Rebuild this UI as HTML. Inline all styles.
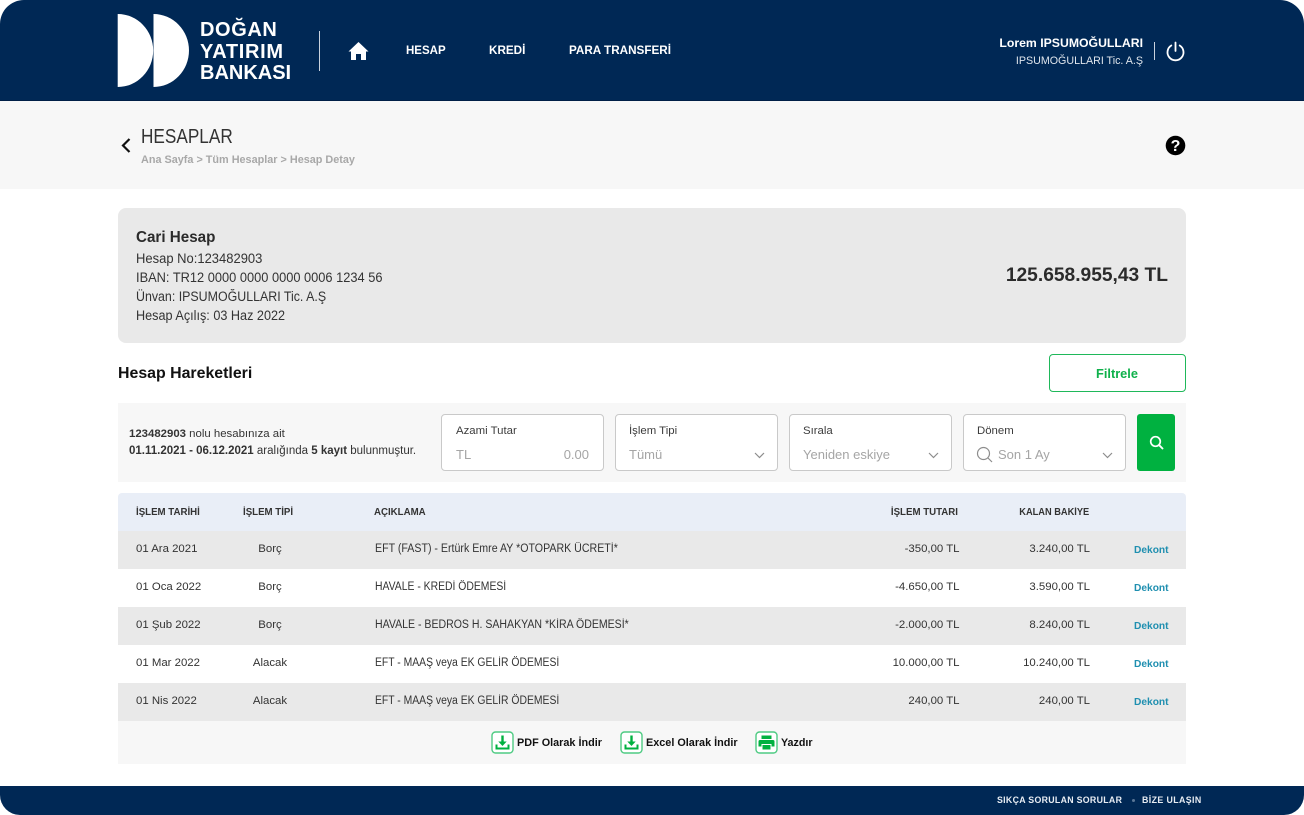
<!DOCTYPE html>
<html lang="tr"><head><meta charset="utf-8"><title>Hesap Detay</title>
<style>
*{box-sizing:border-box;margin:0;padding:0}
html,body{width:1304px;height:815px;overflow:hidden;background:#fff}
body{position:relative;font-family:"Liberation Sans",sans-serif;color:#333}
.a,.t{position:absolute}
.t{white-space:nowrap;line-height:16px;height:16px}
.r{text-align:right}
.c{text-align:center}
.b{font-weight:700}
.row{position:absolute;left:118px;width:1068px;height:38px}
.g{background:#e9e9e9}
.in{position:absolute;top:414px;width:163px;height:57px;background:#fff;border:1px solid #c9c9c9;border-radius:4px}
.lab{font-size:11.400px;color:#3c3c3c}
.ph{font-size:13px;color:#a5a5a5}
.th{font-size:9.700px;font-weight:700;color:#333}
.td{font-size:11.400px;color:#333}
.ds{font-size:11.500px;color:#333;transform-origin:left center}
.ac{font-size:13.500px;color:#333;transform-origin:left center}
.dk{font-size:10.200px;font-weight:700;color:#1f8fb0}
.act{font-size:10.850px;font-weight:700;color:#111}
svg{position:absolute;display:block}
</style></head><body>
<div class="a" style="left:0;top:0;width:1304px;height:101px;background:#002855;border-radius:24px 24px 0 0;border-bottom:1px solid #001f47"></div>
<svg style="left:117px;top:13px" width="74" height="76" viewBox="0 0 74 76"><path fill="#fff" d="M0.700 1A35.500 36.500 0 0 1 0.700 74ZM36.500 1A35.500 36.500 0 0 1 36.500 74Z"/></svg>
<div class="t b" style="left:200px;top:21px;font-size:20px;letter-spacing:.6px;line-height:18px;height:18px;color:#fff">DOĞAN</div>
<div class="t b" style="left:200px;top:43px;font-size:20px;letter-spacing:.7px;line-height:18px;height:18px;color:#fff">YATIRIM</div>
<div class="t b" style="left:200px;top:64px;font-size:20px;line-height:18px;height:18px;color:#fff">BANKASI</div>
<div class="a" style="left:319px;top:31px;width:1px;height:40px;background:#c9d2de"></div>
<svg style="left:348px;top:41px" width="21" height="20" viewBox="0 0 21 20"><path fill="#fff" d="M10.500 1 0.500 10.500 3 10.500 3 19 8 19 8 13 13 13 13 19 18 19 18 10.500 20.500 10.500Z"/></svg>
<div class="t b" style="left:406px;top:43px;font-size:11.500px;color:#fff">HESAP</div>
<div class="t b" style="left:489px;top:43px;font-size:11.700px;color:#fff">KREDİ</div>
<div class="t b" style="left:569px;top:43px;font-size:11.700px;color:#fff">PARA TRANSFERİ</div>
<div class="t b r" style="right:161px;top:35px;font-size:12.250px;color:#fff">Lorem IPSUMOĞULLARI</div>
<div class="t r" style="right:161px;top:53px;font-size:10.700px;color:#dfe5ec">IPSUMOĞULLARI Tic. A.Ş</div>
<div class="a" style="left:1154px;top:42px;width:1px;height:18px;background:#c9d2de"></div>
<svg style="left:1165px;top:41px" width="21" height="21" viewBox="0 0 21 21"><path fill="none" stroke="#fff" stroke-width="1.800" stroke-linecap="round" d="M10.500 1.500V10M6.300 4.500A8 8 0 1 0 14.700 4.500"/></svg>

<div class="a" style="left:0;top:101px;width:1304px;height:88px;background:#f7f7f7"></div>
<svg style="left:119px;top:137px" width="14" height="16" viewBox="0 0 14 16"><path fill="none" stroke="#111" stroke-width="2.200" d="M10.500 2 4 8.500 10.500 15"/></svg>
<div class="t" style="left:141px;top:126px;font-size:20px;line-height:22px;height:22px;color:#333;transform:scaleX(.86);transform-origin:left center">HESAPLAR</div>
<div class="t b" style="left:141px;top:152px;font-size:10.850px;color:#a8a8a8">Ana Sayfa &gt; Tüm Hesaplar &gt; Hesap Detay</div>
<svg style="left:1165px;top:135px" width="21" height="21" viewBox="0 0 21 21"><circle cx="10.500" cy="10.500" r="9.800" fill="#000"/><text x="10.500" y="16" text-anchor="middle" font-family="Liberation Sans" font-weight="700" font-size="16" fill="#fff">?</text></svg>

<div class="a" style="left:118px;top:208px;width:1068px;height:135px;background:#e9e9e9;border-radius:8px"></div>
<div class="t b" style="left:136px;top:230px;font-size:16px;color:#2b2b2b;transform:scaleX(.95);transform-origin:left center">Cari Hesap</div>
<div class="t ac" style="left:136px;top:251px;transform:scaleX(.962)">Hesap No:123482903</div>
<div class="t ac" style="left:136px;top:270px;transform:scaleX(.95)">IBAN: TR12 0000 0000 0000 0006 1234 56</div>
<div class="t ac" style="left:136px;top:289px;transform:scaleX(.918)">Ünvan: IPSUMOĞULLARI Tic. A.Ş</div>
<div class="t ac" style="left:136px;top:308px;transform:scaleX(.937)">Hesap Açılış: 03 Haz 2022</div>
<div class="t b r" style="right:136px;top:266px;font-size:19.200px;line-height:20px;height:20px;color:#2b2b2b">125.658.955,43 TL</div>

<div class="t b" style="left:118px;top:366px;font-size:15.900px;color:#111">Hesap Hareketleri</div>
<div class="a" style="left:1049px;top:354px;width:137px;height:38px;border:1px solid #1fb85a;border-radius:4px;background:#fff"></div>
<div class="t b c" style="left:1049px;width:136px;top:366px;font-size:12.800px;color:#0fb14b">Filtrele</div>

<div class="a" style="left:118px;top:403px;width:1068px;height:79px;background:#f7f7f7"></div>
<div class="t" style="left:129px;top:426px;font-size:11.400px;color:#333"><span class="b">123482903</span> nolu hesabınıza ait</div>
<div class="t" style="left:129px;top:443px;font-size:11.500px;color:#333"><span class="b">01.11.2021 - 06.12.2021</span> aralığında <span class="b">5 kayıt</span> bulunmuştur.</div>

<div class="in" style="left:441px"></div>
<div class="t lab" style="left:456px;top:423px">Azami Tutar</div>
<div class="t ph" style="left:456px;top:447px">TL</div>
<div class="t ph r" style="right:715px;top:447px">0.00</div>

<div class="in" style="left:615px"></div>
<div class="t lab" style="left:629px;top:423px">İşlem Tipi</div>
<div class="t ph" style="left:629px;top:447px">Tümü</div>
<svg style="left:754px;top:452px" width="11" height="7" viewBox="0 0 11 7"><path fill="none" stroke="#8d8d8d" stroke-width="1.200" d="M1 1 5.500 5.500 10 1"/></svg>

<div class="in" style="left:789px"></div>
<div class="t lab" style="left:803px;top:423px">Sırala</div>
<div class="t ph" style="left:803px;top:447px">Yeniden eskiye</div>
<svg style="left:928px;top:452px" width="11" height="7" viewBox="0 0 11 7"><path fill="none" stroke="#8d8d8d" stroke-width="1.200" d="M1 1 5.500 5.500 10 1"/></svg>

<div class="in" style="left:963px"></div>
<div class="t lab" style="left:977px;top:423px">Dönem</div>
<svg style="left:976px;top:446px" width="17" height="17" viewBox="0 0 17 17"><circle cx="7.500" cy="7.500" r="6" fill="none" stroke="#8d8d8d" stroke-width="1.200"/><path stroke="#8d8d8d" stroke-width="1.200" d="M12 12 16 16"/></svg>
<div class="t ph" style="left:998px;top:447px">Son 1 Ay</div>
<svg style="left:1102px;top:452px" width="11" height="7" viewBox="0 0 11 7"><path fill="none" stroke="#8d8d8d" stroke-width="1.200" d="M1 1 5.500 5.500 10 1"/></svg>

<div class="a" style="left:1137px;top:414px;width:38px;height:57px;background:#00b140;border-radius:3px"></div>
<svg style="left:1148px;top:434px" width="17" height="17" viewBox="0 0 17 17"><circle cx="7.500" cy="7.500" r="4.800" fill="none" stroke="#fff" stroke-width="1.700"/><path stroke="#fff" stroke-width="1.900" stroke-linecap="round" d="M11.200 11.200 14.500 14.500"/></svg>

<div class="a" style="left:118px;top:493px;width:1068px;height:38px;background:#e9eef7;border-radius:4px 4px 0 0"></div>
<div class="t th" style="left:136px;top:505px">İŞLEM TARİHİ</div>
<div class="t th" style="left:243px;top:505px">İŞLEM TİPİ</div>
<div class="t th" style="left:374px;top:505px">AÇIKLAMA</div>
<div class="t th r" style="right:346px;top:505px">İŞLEM TUTARI</div>
<div class="t th r" style="right:215px;top:505px;transform:scaleX(.955);transform-origin:right center">KALAN BAKİYE</div>

<div class="row g" style="top:531px"></div>
<div class="t td" style="left:136px;top:541px">01 Ara 2021</div>
<div class="t td c" style="left:240px;width:60px;top:541px">Borç</div>
<div class="t ds" style="left:375px;top:541px;transform:scaleX(.924)">EFT (FAST) - Ertürk Emre AY *OTOPARK ÜCRETİ*</div>
<div class="t td r" style="right:344.500px;top:541px">-350,00 TL</div>
<div class="t td r" style="right:214px;top:541px">3.240,00 TL</div>
<div class="t dk" style="left:1134px;top:543px">Dekont</div>

<div class="row" style="top:569px;background:#fff"></div>
<div class="t td" style="left:136px;top:579px">01 Oca 2022</div>
<div class="t td c" style="left:240px;width:60px;top:579px">Borç</div>
<div class="t ds" style="left:375px;top:579px;transform:scaleX(.903)">HAVALE - KREDİ ÖDEMESİ</div>
<div class="t td r" style="right:344.500px;top:579px">-4.650,00 TL</div>
<div class="t td r" style="right:214px;top:579px">3.590,00 TL</div>
<div class="t dk" style="left:1134px;top:581px">Dekont</div>

<div class="row g" style="top:607px"></div>
<div class="t td" style="left:136px;top:617px">01 Şub 2022</div>
<div class="t td c" style="left:240px;width:60px;top:617px">Borç</div>
<div class="t ds" style="left:375px;top:617px;transform:scaleX(.917)">HAVALE - BEDROS H. SAHAKYAN *KİRA ÖDEMESİ*</div>
<div class="t td r" style="right:344.500px;top:617px">-2.000,00 TL</div>
<div class="t td r" style="right:214px;top:617px">8.240,00 TL</div>
<div class="t dk" style="left:1134px;top:619px">Dekont</div>

<div class="row" style="top:645px;background:#fff"></div>
<div class="t td" style="left:136px;top:655px">01 Mar 2022</div>
<div class="t td c" style="left:240px;width:60px;top:655px">Alacak</div>
<div class="t ds" style="left:375px;top:655px;transform:scaleX(.902)">EFT - MAAŞ veya EK GELİR ÖDEMESİ</div>
<div class="t td r" style="right:344.500px;top:655px">10.000,00 TL</div>
<div class="t td r" style="right:214px;top:655px">10.240,00 TL</div>
<div class="t dk" style="left:1134px;top:657px">Dekont</div>

<div class="row g" style="top:683px"></div>
<div class="t td" style="left:136px;top:693px">01 Nis 2022</div>
<div class="t td c" style="left:240px;width:60px;top:693px">Alacak</div>
<div class="t ds" style="left:375px;top:693px;transform:scaleX(.902)">EFT - MAAŞ veya EK GELİR ÖDEMESİ</div>
<div class="t td r" style="right:344.500px;top:693px">240,00 TL</div>
<div class="t td r" style="right:214px;top:693px">240,00 TL</div>
<div class="t dk" style="left:1134px;top:695px">Dekont</div>

<div class="a" style="left:118px;top:721px;width:1068px;height:43px;background:#f7f7f7"></div>
<svg style="left:491px;top:731px" width="23" height="23" viewBox="0 0 23 23"><rect x="1" y="1" width="21" height="21" rx="3.500" fill="#fff" stroke="#4fcb83" stroke-width="1.400"/><path fill="#00b140" d="M10.300 4.500h2.400v6h3l-4.200 4.500-4.200-4.500h3zM4.500 13.500h2v3h10v-3h2v5h-14z"/></svg>
<div class="t act" style="left:517px;top:735px">PDF Olarak İndir</div>
<svg style="left:620px;top:731px" width="23" height="23" viewBox="0 0 23 23"><rect x="1" y="1" width="21" height="21" rx="3.500" fill="#fff" stroke="#4fcb83" stroke-width="1.400"/><path fill="#00b140" d="M10.300 4.500h2.400v6h3l-4.200 4.500-4.200-4.500h3zM4.500 13.500h2v3h10v-3h2v5h-14z"/></svg>
<div class="t act" style="left:646px;top:735px">Excel Olarak İndir</div>
<svg style="left:755px;top:731px" width="23" height="23" viewBox="0 0 23 23"><rect x="1" y="1" width="21" height="21" rx="3.500" fill="#fff" stroke="#4fcb83" stroke-width="1.400"/><path fill="#00b140" d="M6.500 4.500h10v3.500h-10zM5 9h13a1.500 1.500 0 0 1 1.500 1.500v5h-3v-2.500h-10v2.500h-3v-5A1.500 1.500 0 0 1 5 9zM7.500 14h8v4.500h-8z"/></svg>
<div class="t act" style="left:781px;top:735px;font-size:10.700px">Yazdır</div>

<div class="a" style="left:0;top:786px;width:1304px;height:29px;background:#002855;border-radius:0 0 20px 20px"></div>
<div class="t b" style="left:997px;top:792px;font-size:8.800px;letter-spacing:.3px;color:#e8edf3">SIKÇA SORULAN SORULAR</div>
<div class="a" style="left:1132px;top:799px;width:3px;height:3px;border-radius:50%;background:#5a7696"></div>
<div class="t b" style="left:1142px;top:792px;font-size:8.800px;letter-spacing:.4px;color:#e8edf3">BİZE ULAŞIN</div>
</body></html>
